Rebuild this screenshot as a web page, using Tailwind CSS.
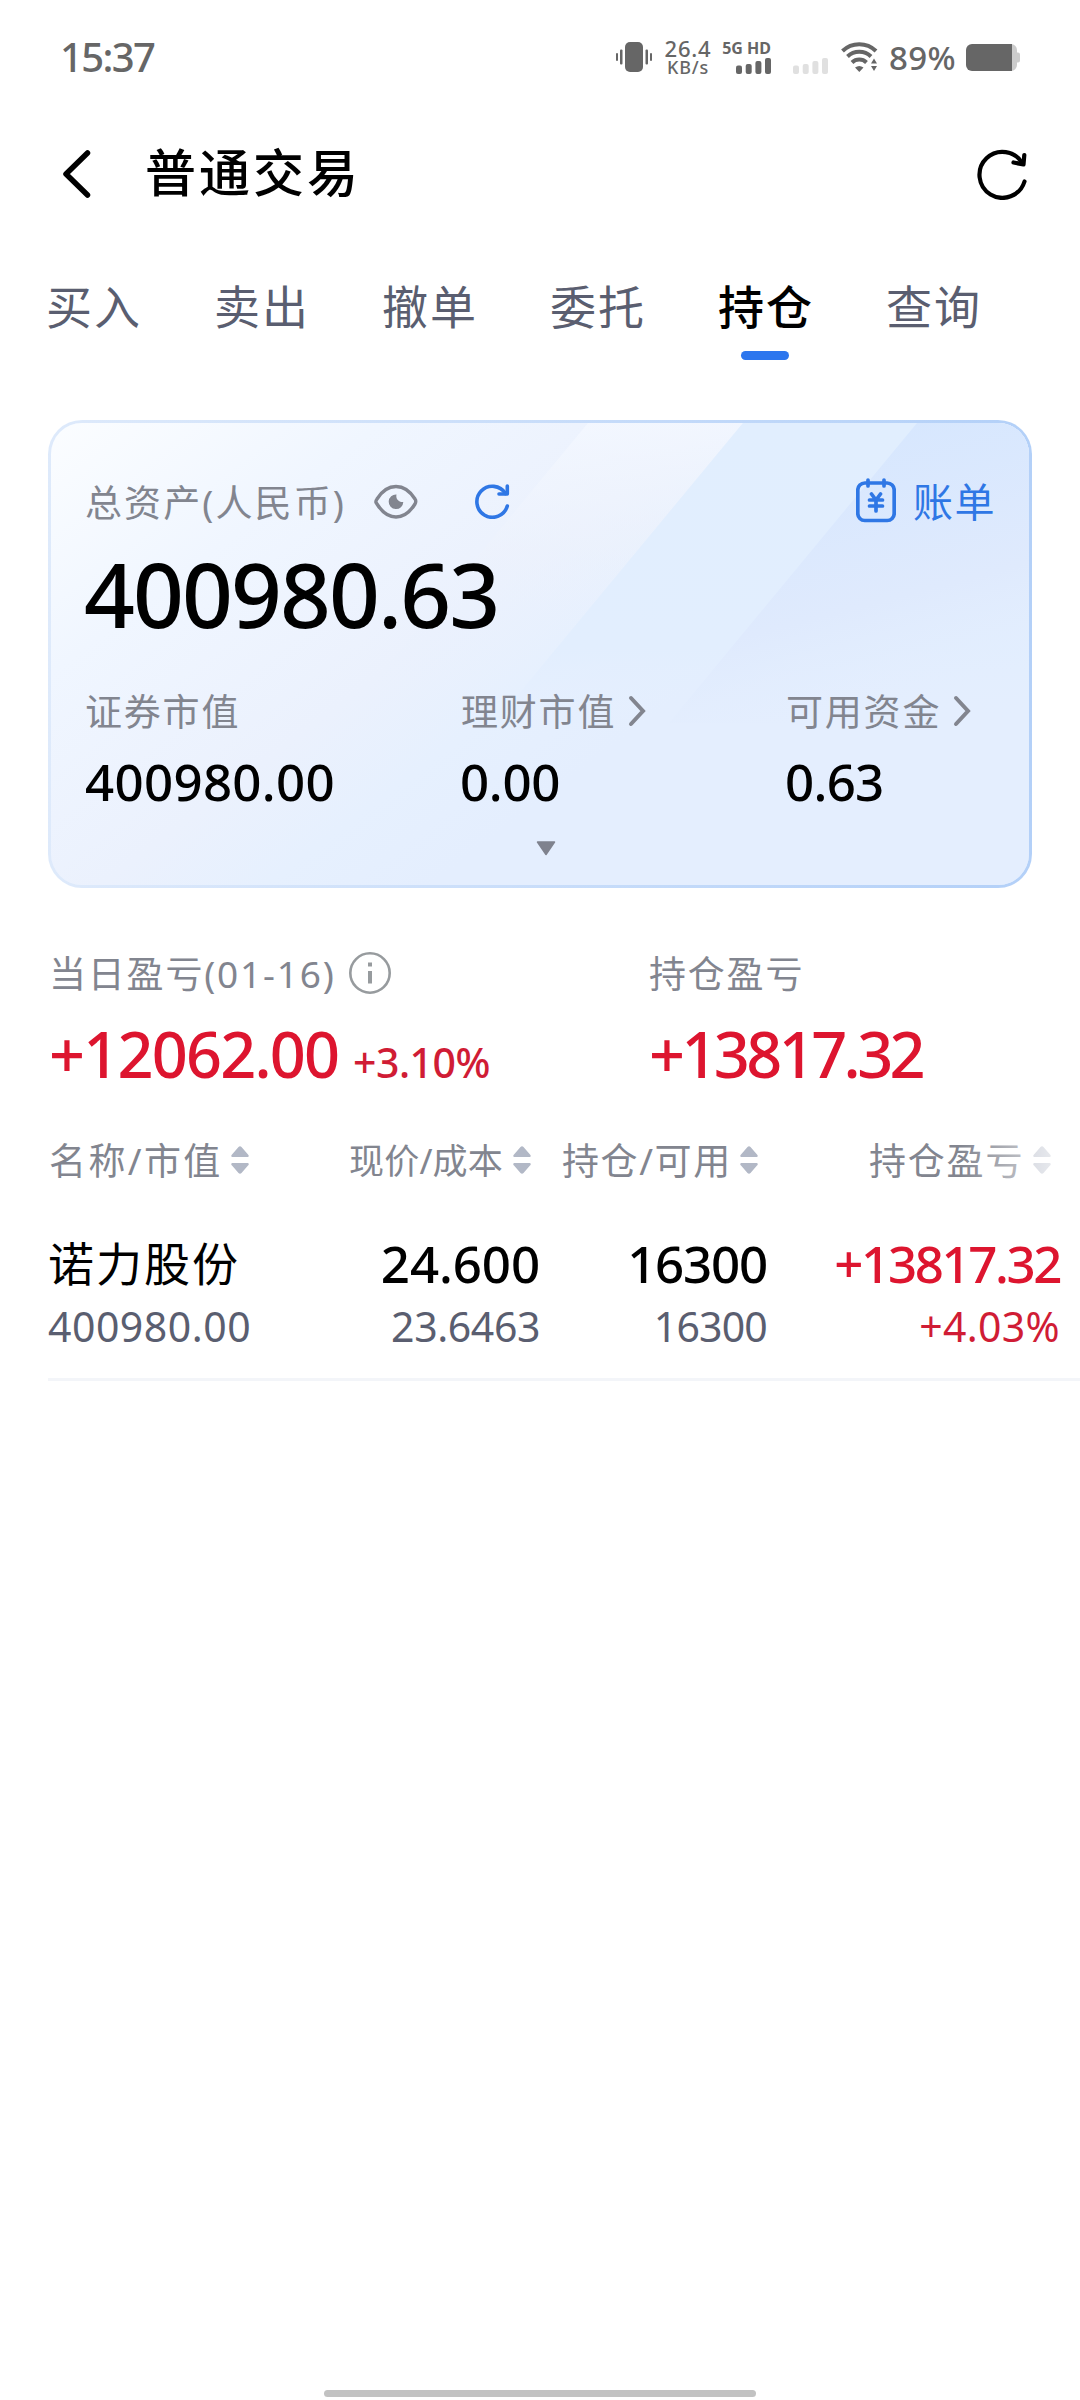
<!DOCTYPE html>
<html lang="zh-CN">
<head>
<meta charset="utf-8">
<title>普通交易</title>
<script src="https://cdn.jsdelivr.net/npm/@tailwindcss/browser@4"></script>
</head>
<body class="bg-white">
<div class="flex h-[2400px] w-[1080px] flex-col overflow-hidden bg-white font-['Noto_Sans','Noto_Sans_CJK_SC',sans-serif] leading-none whitespace-nowrap text-black">

  <!-- status bar -->
  <header class="flex h-[114px] shrink-0 items-center pl-[60px] text-[#666]">
    <div class="w-[556px] text-[40px] font-medium tracking-[-1.6px]">15:37</div>
    <svg class="h-[30px] w-9" viewBox="0 0 36 30" fill="#666"><rect x="9" width="18" height="30" rx="5"/><rect y="11" width="2" height="8" rx="1"/><rect x="4" y="7.500" width="2.500" height="15" rx="1"/><rect x="29.500" y="7.500" width="2.500" height="15" rx="1"/><rect x="34" y="11" width="2" height="8" rx="1"/></svg>
    <div class="ml-[12px] flex w-[48px] flex-col items-center font-medium">
      <span class="text-[22px] leading-[20px] tracking-[0.8px]">26.4</span>
      <span class="text-[18px] leading-[18px] tracking-[0.8px]">KB/s</span>
    </div>
    <div class="ml-[11px] flex w-[48px] flex-col items-end gap-[3px]">
      <span class="text-[16px] leading-[14px] font-bold">5G HD</span>
      <svg class="h-4 w-[35px]" viewBox="0 0 35 16" fill="#666"><rect y="7.500" width="6" height="8.500" rx="2"/><rect x="9.700" y="6" width="6" height="10" rx="2"/><rect x="19.400" y="3" width="6" height="13" rx="2"/><rect x="29" width="6" height="16" rx="2"/></svg>
    </div>
    <svg class="mt-[17px] ml-[22px] h-4 w-[35px]" viewBox="0 0 35 16" fill="#e0e0e0"><rect y="7.500" width="6" height="8.500" rx="2"/><rect x="9.700" y="6" width="6" height="10" rx="2"/><rect x="19.400" y="3" width="6" height="13" rx="2"/><rect x="29" width="6" height="16" rx="2"/></svg>
    <svg class="ml-[13px] h-[30px] w-[37px]" viewBox="0 0 37 30"><g fill="none" stroke="#666" stroke-width="4"><path d="M1.500 9A24 24 0 0 1 35 9"/><path d="M6.500 14.500A17 17 0 0 1 30 14.500"/><path d="M11 20.500A10.500 10.500 0 0 1 25.500 20.500"/></g><path d="M14 25.500Q18.300 22.500 22.500 25.500L18.300 30ZM30 21.500L33 16.500L36 21.500ZM30 24L33 29L36 24Z" fill="#666"/></svg>
    <div class="ml-[11px] w-[69px] pt-px text-[33px] font-medium tracking-[0.4px]">89%</div>
    <svg class="ml-[8px] h-[27px] w-[54px]" viewBox="0 0 54 27"><path d="M44 0h1a6 6 0 0 1 6 6v2.500h1q2 0 2 2v6q0 2-2 2h-1V21a6 6 0 0 1-6 6h-1z" fill="#ccc"/><path d="M6 0H46V27H6A6 6 0 0 1 0 21V6A6 6 0 0 1 6 0Z" fill="#666"/></svg>
  </header>

  <!-- title bar -->
  <div class="flex h-[120px] shrink-0 items-center pl-[62px]">
    <svg class="h-[50px] w-[30px]" viewBox="0 0 30 50" fill="none" stroke="#000" stroke-width="5.500" stroke-linecap="round" stroke-linejoin="round"><path d="M25.500 4L4 25L25.500 46"/></svg>
    <h1 class="ml-[53px] w-[831px] pb-[4px] text-[51px] font-medium tracking-[3px]">普通交易</h1>
    <svg class="h-[52px] w-[52px]" viewBox="0 0 52 52" fill="none" stroke="#000" stroke-width="4.200" stroke-linecap="round" stroke-linejoin="round"><path d="M48.500 33.500A23 23 0 1 1 46.500 15.500"/><path d="M48.300 7L47.500 16.500L37.500 14.500"/></svg>
  </div>

  <!-- tabs -->
  <nav class="flex h-[186px] shrink-0 items-start pt-[49px] pl-[46px] text-[46px] tracking-[2px] text-[#5a5e70]">
    <div class="w-[168px]">买入</div>
    <div class="w-[168px]">卖出</div>
    <div class="w-[168px]">撤单</div>
    <div class="w-[168px]">委托</div>
    <div class="flex w-[168px] flex-col font-medium text-black">持仓<span class="mt-[22px] ml-[23px] h-[9px] w-12 rounded-full bg-[#2c76ee]"></span></div>
    <div>查询</div>
  </nav>

  <!-- asset card -->
  <section class="ml-12 h-[468px] w-[984px] shrink-0 rounded-[34px] bg-linear-to-r from-[#deeafb] to-[#b3d0f8] p-[3px]">
    <div class="relative h-full overflow-hidden rounded-[31px] bg-[#e4eefe]">
      <svg class="absolute inset-0 h-full w-full" viewBox="0 0 978 462" preserveAspectRatio="none">
        <defs>
          <linearGradient id="base" gradientUnits="userSpaceOnUse" x1="0" y1="0" x2="400" y2="530"><stop offset="0" stop-color="#fbfdff"/><stop offset=".3" stop-color="#f0f6ff"/><stop offset=".6" stop-color="#ebf1fd"/><stop offset=".75" stop-color="#e6f0fe"/><stop offset=".9" stop-color="#e4eefe"/></linearGradient>
          <linearGradient id="light" gradientUnits="userSpaceOnUse" x1="560" y1="0" x2="580" y2="240"><stop offset="0" stop-color="#f4f8ff" stop-opacity=".8"/><stop offset=".5" stop-color="#edf2fc" stop-opacity=".5"/><stop offset="1" stop-color="#e6f0fe" stop-opacity="0"/></linearGradient>
          <linearGradient id="mid" gradientUnits="userSpaceOnUse" x1="0" y1="0" x2="0" y2="300"><stop offset="0" stop-color="#e1eefe"/><stop offset=".75" stop-color="#e2eefe"/><stop offset="1" stop-color="#e4eefe" stop-opacity="0"/></linearGradient>
          <linearGradient id="deep" gradientUnits="userSpaceOnUse" x1="850" y1="0" x2="920" y2="270"><stop offset="0" stop-color="#d7e7fe"/><stop offset=".6" stop-color="#dfeafd"/><stop offset="1" stop-color="#e4eefe" stop-opacity="0"/></linearGradient>
        </defs>
        <rect width="978" height="462" fill="url(#base)"/>
        <path d="M537 0H692L437 308H282Z" fill="url(#light)"/>
        <path d="M692 0H978V308H437Z" fill="url(#mid)"/>
        <path d="M866 0H978V300H618Z" fill="url(#deep)"/>
      </svg>
      <div class="relative flex h-full flex-col pl-[34px]">
        <div class="mt-[56px] flex h-[46px] items-center text-[37px] text-[#82858f]">
          <span class="w-[289px] tracking-[2.1px]">总资产(人民币)</span>
          <svg class="h-[36px] w-[44px]" viewBox="0 0 44 36"><path d="M2 18.500Q1.500 17 3 15C8 7 14.500 2.500 22 2.500S36 7 41 15Q42.500 17 41 20C36 28 29.500 33 22 33S8 28 3 20Z" fill="none" stroke="#82858f" stroke-width="3.400"/><path d="M22.500 10.500A7.300 7.300 0 1 0 29.300 18A6 6 0 0 1 22.500 10.500Z" fill="#82858f"/></svg>
          <svg class="mb-[2px] ml-[56px] h-[36px] w-[36px]" viewBox="0 0 36 36" fill="none" stroke="#2f77e5" stroke-width="3.600" stroke-linecap="round" stroke-linejoin="round"><path d="M33.300 23A15.500 15.500 0 1 1 31.500 10.500"/><path d="M33.300 3V11H25"/></svg>
          <svg class="mb-[5px] ml-[346px] h-[46px] w-[40px]" viewBox="0 0 40 46" fill="none" stroke="#2f77e5" stroke-width="3.700" stroke-linecap="round"><rect x="1.800" y="6" width="36.400" height="37.500" rx="7"/><path d="M12 3V9M28 3V9"/><path d="M15.500 17L20 23L24.500 17M13.500 23H26.500M13.500 29H26.500M20 23V34"/></svg>
          <span class="ml-[17px] text-[40px] tracking-[1.5px] text-[#2f77e5]">账单</span>
        </div>
        <div class="mt-[19px] -ml-px h-[100px] text-[89px] leading-[100px] font-medium tracking-[-1.9px]">400980.63</div>
        <div class="mt-[42px] flex h-[50px] items-center text-[37px] tracking-[1.8px] text-[#82858f]">
          <span class="w-[376px]">证券市值</span>
          <span class="flex w-[325px] items-center">理财市值<svg class="ml-[12px] h-[32px] w-[18px]" viewBox="0 0 18 32" fill="none" stroke="#82858f" stroke-width="4" stroke-linecap="round"><path d="M3 3L15 16L3 29"/></svg></span>
          <span class="flex items-center">可用资金<svg class="ml-[12px] h-[32px] w-[18px]" viewBox="0 0 18 32" fill="none" stroke="#82858f" stroke-width="4" stroke-linecap="round"><path d="M3 3L15 16L3 29"/></svg></span>
        </div>
        <div class="mt-[20px] flex h-[50px] items-center text-[51px] font-medium tracking-[0.3px]">
          <span class="w-[375px]">400980.00</span><span class="w-[325px] tracking-[-0.3px]">0.00</span><span class="tracking-[-0.7px]">0.63</span>
        </div>
        <svg class="mt-[35px] ml-[451px] h-[15px] w-[20px]" viewBox="0 0 20 15"><path d="M1.500 1H18.500L10 13.500Z" fill="#7f828e" stroke="#7f828e" stroke-width="1.500" stroke-linejoin="round"/></svg>
      </div>
    </div>
  </section>

  <!-- profit and loss -->
  <section class="mt-[62px] flex h-[131px] shrink-0 pl-[49px]">
    <div class="w-[600px]">
      <div class="flex h-[46px] items-center text-[37px] text-[#82858f]"><span class="w-[300px] tracking-[1.800px]">当日盈亏(01-16)</span><svg class="h-[42px] w-[42px]" viewBox="0 0 42 42"><circle cx="21" cy="21" r="19.700" fill="none" stroke="#979b9e" stroke-width="2.600"/><path d="M19 10.500h4v4h-4zM19 19h4v12.500h-4z" fill="#979b9e"/></svg></div>
      <div class="mt-[27px] flex items-baseline text-[#dd152f]"><span class="w-[304px] text-[63px] leading-[62px] font-medium tracking-[-1.8px]">+12062.00</span><span class="text-[41px] font-medium tracking-[-0.5px] text-[#d01c35]">+3.10%</span></div>
    </div>
    <div>
      <div class="flex h-[46px] items-center text-[37px] tracking-[1.8px] text-[#82858f]">持仓盈亏</div>
      <div class="mt-[27px] text-[63px] leading-[62px] font-medium tracking-[-3.6px] text-[#dd152f]">+13817.32</div>
    </div>
  </section>

  <!-- table head -->
  <div class="relative mt-[56px] flex h-[46px] shrink-0 items-center pl-[49px] text-[37px] tracking-[1.8px] text-[#82858f]">
    <div class="flex w-[300px] items-center"><span class="w-[182px] tracking-[2.4px]">名称/市值</span><svg class="h-7 w-[18px]" viewBox="0 0 18 28" fill="#b2b8c6"><path d="M1 11Q-.5 10 1 8.500L7.500 1Q9 -.5 10.500 1L17 8.500Q18.500 10 17 11ZM1 17Q-.5 18 1 19.500L7.500 27Q9 28.500 10.500 27L17 19.500Q18.500 18 17 17Z"/></svg></div>
    <div class="flex w-[213px] items-center"><span class="w-[164px] text-[35px] tracking-[0.2px]">现价/成本</span><svg class="h-7 w-[18px]" viewBox="0 0 18 28" fill="#b2b8c6"><path d="M1 11Q-.5 10 1 8.500L7.500 1Q9 -.5 10.500 1L17 8.500Q18.500 10 17 11ZM1 17Q-.5 18 1 19.500L7.500 27Q9 28.500 10.500 27L17 19.500Q18.500 18 17 17Z"/></svg></div>
    <div class="flex w-[307px] items-center"><span class="w-[178px] tracking-[1.6px]">持仓/可用</span><svg class="h-7 w-[18px]" viewBox="0 0 18 28" fill="#b2b8c6"><path d="M1 11Q-.5 10 1 8.500L7.500 1Q9 -.5 10.500 1L17 8.500Q18.500 10 17 11ZM1 17Q-.5 18 1 19.500L7.500 27Q9 28.500 10.500 27L17 19.500Q18.500 18 17 17Z"/></svg></div>
    <div class="flex items-center"><span class="w-[164px]">持仓盈亏</span><svg class="h-7 w-[18px]" viewBox="0 0 18 28" fill="#b2b8c6"><path d="M1 11Q-.5 10 1 8.500L7.500 1Q9 -.5 10.500 1L17 8.500Q18.500 10 17 11ZM1 17Q-.5 18 1 19.500L7.500 27Q9 28.500 10.500 27L17 19.500Q18.500 18 17 17Z"/></svg></div>
    <div class="absolute top-0 right-0 h-full w-[120px] bg-linear-to-r from-white/0 to-white/90"></div>
  </div>

  <!-- holding row -->
  <div class="mt-[52px] ml-12 h-[146px] shrink-0 border-b-[3px] border-[#f3f5f9]">
    <div class="flex h-[56px] items-center text-[51px] font-medium">
      <span class="w-[290px] text-[46px] font-normal tracking-[2px]">诺力股份</span>
      <span class="w-[202px] text-right tracking-[-0.1px]">24.600</span>
      <span class="w-[227px] text-right tracking-[-1.2px]">16300</span>
      <span class="w-[293px] text-right tracking-[-2.4px] text-[#dd152f]">+13817.32</span>
    </div>
    <div class="mt-[13px] flex h-[44px] items-center text-[41px] text-[#5a5e70]">
      <span class="w-[290px] tracking-[0.5px]">400980.00</span>
      <span class="w-[202px] text-right tracking-[-0.4px]">23.6463</span>
      <span class="w-[227px] text-right tracking-[-0.8px]">16300</span>
      <span class="w-[293px] text-right tracking-[0.3px] text-[#d01c35]">+4.03%</span>
    </div>
  </div>

  <div class="mx-auto mt-auto mb-[3px] h-[7px] w-[432px] shrink-0 rounded-full bg-[#c2c2c2]"></div>
</div>
</body>
</html>
